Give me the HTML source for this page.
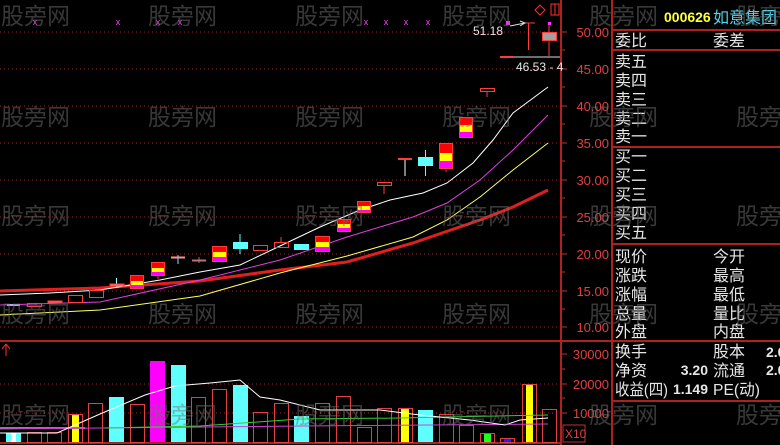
<!DOCTYPE html>
<html><head><meta charset="utf-8"><style>
html,body{margin:0;padding:0;background:#000;width:780px;height:445px;overflow:hidden}
svg{display:block}
.l{font-family:"Liberation Sans","Noto Sans CJK SC",sans-serif;font-size:16px;fill:#e6e6e6}
.ax{font-family:"Liberation Sans",sans-serif;font-size:13px;fill:#e04040;text-anchor:end}
.wm{font-family:"Liberation Sans","Noto Sans CJK SC",sans-serif;font-size:23px;fill:#707070;fill-opacity:.5}
</style></head><body>
<svg width="780" height="445" viewBox="0 0 780 445" xmlns="http://www.w3.org/2000/svg">
<rect width="780" height="445" fill="#000"/>
<g stroke="#a02020" stroke-width="1" stroke-dasharray="1,3">
<line x1="0" y1="32" x2="560" y2="32"/><line x1="0" y1="69" x2="560" y2="69"/><line x1="0" y1="106" x2="560" y2="106"/>
<line x1="0" y1="143" x2="560" y2="143"/><line x1="0" y1="180" x2="560" y2="180"/><line x1="0" y1="217" x2="560" y2="217"/>
<line x1="0" y1="254" x2="560" y2="254"/><line x1="0" y1="291" x2="560" y2="291"/><line x1="0" y1="327" x2="560" y2="327"/>
<line x1="0" y1="384" x2="560" y2="384"/><line x1="0" y1="413" x2="560" y2="413"/>
</g>
<g stroke="#b02020" stroke-width="2">
<line x1="561" y1="0" x2="561" y2="445"/><line x1="612" y1="0" x2="612" y2="445"/>
<line x1="0" y1="341" x2="780" y2="341"/><line x1="0" y1="443" x2="562" y2="443"/>
<line x1="612" y1="30" x2="780" y2="30"/><line x1="612" y1="50" x2="780" y2="50"/>
<line x1="612" y1="147" x2="780" y2="147"/><line x1="612" y1="244" x2="780" y2="244"/>
<line x1="612" y1="401" x2="780" y2="401"/>
</g>
<g stroke="#c03030" stroke-width="1">
<path d="M562 32h5M562 50h3M562 69h5M562 87h3M562 106h5M562 124h3M562 143h5M562 161h3M562 180h5M562 198h3M562 217h5M562 235h3M562 254h5M562 272h3M562 291h5M562 309h3M562 327h5M562 354h5M562 369h3M562 384h5M562 398h3M562 413h5"/>
</g>
<g class="ax">
<text x="609" y="37">50.00</text><text x="609" y="74">45.00</text><text x="609" y="111">40.00</text><text x="609" y="148">35.00</text>
<text x="609" y="185">30.00</text><text x="609" y="222">25.00</text><text x="609" y="259">20.00</text><text x="609" y="296">15.00</text><text x="609" y="332">10.00</text>
<text x="609" y="359">30000</text><text x="609" y="389">20000</text><text x="609" y="418">10000</text>
</g>
<rect x="563" y="425" width="22" height="17" fill="none" stroke="#c03030"/>
<text x="565" y="438" style="font-family:'Liberation Sans',sans-serif;font-size:12px;fill:#e04040">X10</text>
<polyline fill="none" stroke="#e02020" stroke-width="3" points="0,291 100,288 200,281 280,270 347,262 413,243 480,220 513,207 548,190"/>
<polyline fill="none" stroke="#ffff60" stroke-width="1" points="0,315 100,310 200,296 280,273 347,256 413,237 447,220 480,197 513,170 548,143"/>
<polyline fill="none" stroke="#e040e0" stroke-width="1" points="0,305 100,302 200,280 280,260 347,237 413,217 447,203 480,180 513,150 548,115"/>
<polyline fill="none" stroke="#ffffff" stroke-width="1" points="0,295 50,293 100,290 130,285 160,280 200,272 240,265 280,246 320,227 360,210 390,200 423,193 447,183 473,163 493,140 513,113 548,87"/>
<g stroke="#ff3c3c" stroke-width="1">
<line x1="7" y1="305" x2="20" y2="305" stroke="#c8a0ff" stroke-width="2"/>
<rect x="27.5" y="303.5" width="14" height="3" fill="none"/>
<rect x="48" y="301" width="14" height="2" fill="#ff6080"/>
<rect x="68.5" y="295.5" width="14" height="7" fill="none"/>
<rect x="89.5" y="290.5" width="14" height="7" fill="none"/>
<line x1="116.5" y1="278" x2="116.5" y2="288" stroke="#a0ffff"/><rect x="110" y="284" width="14" height="2" fill="#ff8080"/>
<line x1="178" y1="255" x2="178" y2="264" stroke="#60ffff"/><rect x="171" y="256.5" width="14" height="2" fill="#ff9090" stroke="none"/>
<line x1="199" y1="257" x2="199" y2="263" stroke="#c06060"/><rect x="192" y="259.5" width="14" height="2" fill="#c07070" stroke="none"/>
<line x1="240" y1="234" x2="240" y2="254" stroke="#60ffff"/><rect x="233" y="242" width="15" height="7" fill="#60ffff" stroke="none"/>
<rect x="253.5" y="245.5" width="14" height="5" fill="none"/>
<line x1="281" y1="237" x2="281" y2="242"/><rect x="274.5" y="242.5" width="14" height="5" fill="none"/>
<rect x="294" y="244" width="15" height="6" fill="#60ffff" stroke="none"/>
<line x1="384" y1="185" x2="384" y2="194"/><rect x="377.5" y="182.5" width="14" height="3" fill="none"/>
<line x1="405" y1="159" x2="405" y2="176" stroke="#fff"/><line x1="398" y1="159" x2="412" y2="159" stroke-width="2"/>
<line x1="425.5" y1="150" x2="425.5" y2="176" stroke="#60ffff"/><rect x="418" y="157" width="15" height="9" fill="#60ffff" stroke="none"/>
<line x1="487" y1="91" x2="487" y2="97"/><rect x="480.5" y="88.5" width="14" height="3" fill="none"/>
<line x1="500" y1="57" x2="560" y2="57" stroke="#ddd"/><line x1="500" y1="57" x2="513" y2="57" stroke-width="2"/>
<line x1="528.5" y1="23" x2="528.5" y2="50"/><line x1="524" y1="23" x2="535" y2="23"/>
<line x1="549" y1="23" x2="549" y2="56"/><rect x="542.5" y="32.5" width="14" height="8" fill="#a0a0a0"/>
</g>
<g stroke="#ff3c3c">
<g><rect x="130" y="275" width="14" height="6" fill="#f00" stroke="none"/><rect x="130" y="281" width="14" height="4" fill="#ff0" stroke="none"/><rect x="130" y="285" width="14" height="4" fill="#f0f" stroke="none"/><rect x="130.5" y="275.5" width="13" height="13" fill="none"/></g>
<g><line x1="158" y1="276" x2="158" y2="279"/><rect x="151" y="262" width="14" height="6" fill="#f00" stroke="none"/><rect x="151" y="268" width="14" height="4" fill="#ff0" stroke="none"/><rect x="151" y="272" width="14" height="4" fill="#f0f" stroke="none"/><rect x="151.5" y="262.5" width="13" height="13" fill="none"/></g>
<g><rect x="212" y="246" width="15" height="6" fill="#f00" stroke="none"/><rect x="212" y="252" width="15" height="5" fill="#ff0" stroke="none"/><rect x="212" y="257" width="15" height="5" fill="#f0f" stroke="none"/><rect x="212.5" y="246.5" width="14" height="15" fill="none"/></g>
<g><rect x="315" y="236" width="15" height="6" fill="#f00" stroke="none"/><rect x="315" y="242" width="15" height="5" fill="#ff0" stroke="none"/><rect x="315" y="247" width="15" height="5" fill="#f0f" stroke="none"/><rect x="315.5" y="236.5" width="14" height="15" fill="none"/></g>
<g><rect x="337" y="219" width="14" height="5" fill="#f00" stroke="none"/><rect x="337" y="224" width="14" height="4" fill="#ff0" stroke="none"/><rect x="337" y="228" width="14" height="4" fill="#f0f" stroke="none"/><rect x="337.5" y="219.5" width="13" height="12" fill="none"/></g>
<g><rect x="357" y="201" width="14" height="5" fill="#f00" stroke="none"/><rect x="357" y="206" width="14" height="4" fill="#ff0" stroke="none"/><rect x="357" y="210" width="14" height="3" fill="#f0f" stroke="none"/><rect x="357.5" y="201.5" width="13" height="11" fill="none"/></g>
<g><line x1="446" y1="169" x2="446" y2="172"/><rect x="439" y="143" width="14" height="10" fill="#f00" stroke="none"/><rect x="439" y="153" width="14" height="8" fill="#ff0" stroke="none"/><rect x="439" y="161" width="14" height="8" fill="#f0f" stroke="none"/><rect x="439.5" y="143.5" width="13" height="25" fill="none"/></g>
<g><rect x="459" y="117" width="14" height="8" fill="#f00" stroke="none"/><rect x="459" y="125" width="14" height="7" fill="#ff0" stroke="none"/><rect x="459" y="132" width="14" height="6" fill="#f0f" stroke="none"/><rect x="459.5" y="117.5" width="13" height="20" fill="none"/></g>
</g>
<g style="font-family:'Liberation Sans',sans-serif;font-size:9px;fill:#ff40ff" text-anchor="middle">
<text x="35" y="25">x</text><text x="118" y="25">x</text><text x="158" y="25">x</text><text x="180" y="25">x</text>
<text x="366" y="25">x</text><text x="386" y="25">x</text><text x="406" y="25">x</text><text x="428" y="25">x</text>
</g>
<rect x="506" y="21" width="4" height="4" fill="#ff30ff"/><rect x="548" y="22" width="3" height="3" fill="#ff30ff"/>
<text x="473" y="35" style="font-family:'Liberation Sans',sans-serif;font-size:12px;fill:#e6e6e6">51.18</text>
<path d="M510 26 L525 23 M520 21 L525 23 L520 26" stroke="#ddd" fill="none"/>
<text x="516" y="71" style="font-family:'Liberation Sans',sans-serif;font-size:12px;fill:#e6e6e6">46.53 - 4</text>
<path d="M540 5 L545 10 L540 15 L535 10 Z" fill="none" stroke="#ff3030"/>
<rect x="551" y="4" width="8" height="11" fill="none" stroke="#ff3030"/><line x1="555" y1="4" x2="555" y2="15" stroke="#ff3030"/>
<path d="M6 356 V344 M2 349 L6 344 L10 349" stroke="#ff3030" fill="none"/>
<g stroke="#e04040" stroke-width="1">
<rect x="6" y="433" width="15" height="9" fill="#60ffff" stroke="none"/><rect x="11" y="433" width="5" height="9" fill="#fff" stroke="none"/>
<rect x="27.5" y="432.5" width="14" height="10" fill="none"/>
<rect x="47.5" y="432.5" width="14" height="10" fill="none"/>
<rect x="68.5" y="414.5" width="14" height="28" fill="none"/><rect x="72" y="415" width="7" height="27" fill="#ff0" stroke="none"/>
<rect x="88.5" y="403.5" width="14" height="39" fill="none"/>
<rect x="109" y="397" width="15" height="45" fill="#60ffff" stroke="none"/>
<rect x="130.5" y="404.5" width="14" height="38" fill="none"/>
<rect x="150" y="361" width="15" height="81" fill="#ff00ff" stroke="none"/>
<rect x="171" y="365" width="15" height="77" fill="#60ffff" stroke="none"/>
<rect x="191.5" y="397.5" width="14" height="45" fill="none"/>
<rect x="212.5" y="389.5" width="14" height="53" fill="none"/>
<rect x="233" y="385" width="15" height="57" fill="#60ffff" stroke="none"/>
<rect x="253.5" y="412.5" width="14" height="30" fill="none"/>
<rect x="274.5" y="403.5" width="14" height="39" fill="none"/>
<rect x="294" y="416" width="15" height="26" fill="#60ffff" stroke="none"/>
<rect x="315.5" y="403.5" width="14" height="39" fill="none"/>
<rect x="336.5" y="396.5" width="14" height="46" fill="none"/>
<rect x="357.5" y="427.5" width="14" height="15" fill="none"/>
<rect x="377.5" y="408.5" width="14" height="34" fill="none"/>
<rect x="398.5" y="408.5" width="14" height="34" fill="none"/><rect x="401" y="409" width="8" height="33" fill="#ff0" stroke="none"/>
<rect x="418" y="410" width="15" height="32" fill="#60ffff" stroke="none"/>
<rect x="439.5" y="414.5" width="14" height="28" fill="none"/>
<rect x="459.5" y="425.5" width="14" height="17" fill="none"/>
<rect x="480.5" y="433.5" width="14" height="9" fill="none"/><rect x="484" y="434" width="7" height="8" fill="#20ff20" stroke="none"/>
<rect x="500.5" y="438.5" width="14" height="4" fill="none"/><rect x="504" y="439" width="7" height="3" fill="#2020ff" stroke="none"/>
<rect x="522.5" y="384.5" width="14" height="58" fill="none"/><rect x="526" y="385" width="7" height="57" fill="#ff0" stroke="none"/>
<rect x="542.5" y="409.5" width="14" height="33" fill="none"/>
</g>
<polyline fill="none" stroke="#888" stroke-width="2" points="0,428 85,428"/>
<polyline fill="none" stroke="#d040d0" stroke-width="1" points="0,429 100,428 300,426 548,424"/>
<polyline fill="none" stroke="#30d030" stroke-width="1" points="105,428 200,426 300,419 400,418 548,415"/>
<polyline fill="none" stroke="#fff" stroke-width="1" points="0,433 57,433 100,414 145,395 175,386 210,383 240,380 260,397 280,400 320,410 380,410 420,415 470,420 505,425 520,420 548,418"/>
<text x="664" y="22" style="font-family:'Liberation Sans',sans-serif;font-size:14px;font-weight:bold;fill:#ffff40">000626</text>
<text x="713" y="23" style="font-family:'Liberation Sans','Noto Sans CJK SC',sans-serif;font-size:16px;fill:#50d8f0">如意集团</text>
<g class="l">
<text x="615" y="46">委比</text><text x="713" y="46">委差</text>
<text x="615" y="67">卖五</text><text x="615" y="86">卖四</text><text x="615" y="105">卖三</text><text x="615" y="124">卖二</text><text x="615" y="142">卖一</text>
<text x="615" y="162">买一</text><text x="615" y="181">买二</text><text x="615" y="200">买三</text><text x="615" y="219">买四</text><text x="615" y="238">买五</text>
<text x="615" y="262">现价</text><text x="713" y="262">今开</text>
<text x="615" y="281">涨跌</text><text x="713" y="281">最高</text>
<text x="615" y="300">涨幅</text><text x="713" y="300">最低</text>
<text x="615" y="319">总量</text><text x="713" y="319">量比</text>
<text x="615" y="337">外盘</text><text x="713" y="337">内盘</text>
<text x="615" y="357">换手</text><text x="713" y="357">股本</text>
<text x="615" y="376">净资</text><text x="713" y="376">流通</text>
<text x="615" y="395" textLength="53" lengthAdjust="spacingAndGlyphs">收益(四)</text><text x="713" y="395" textLength="47" lengthAdjust="spacingAndGlyphs">PE(动)</text>
</g>
<g style="font-family:'Liberation Sans',sans-serif;font-size:14px;font-weight:bold;fill:#e6e6e6">
<text x="708" y="375" text-anchor="end">3.20</text><text x="708" y="394" text-anchor="end">1.149</text>
<text x="766" y="357">2.0</text><text x="766" y="375">2.0</text>
</g>
<g class="wm">
<text x="1" y="24">股旁网</text><text x="148" y="24">股旁网</text><text x="295" y="24">股旁网</text><text x="442" y="24">股旁网</text><text x="589" y="24">股旁网</text><text x="736" y="24">股旁网</text>
<text x="1" y="125">股旁网</text><text x="148" y="125">股旁网</text><text x="295" y="125">股旁网</text><text x="442" y="125">股旁网</text><text x="589" y="125">股旁网</text><text x="736" y="125">股旁网</text>
<text x="1" y="224">股旁网</text><text x="148" y="224">股旁网</text><text x="295" y="224">股旁网</text><text x="442" y="224">股旁网</text><text x="589" y="224">股旁网</text><text x="736" y="224">股旁网</text>
<text x="1" y="322">股旁网</text><text x="148" y="322">股旁网</text><text x="295" y="322">股旁网</text><text x="442" y="322">股旁网</text><text x="589" y="322">股旁网</text><text x="736" y="322">股旁网</text>
<text x="1" y="423">股旁网</text><text x="148" y="423">股旁网</text><text x="295" y="423">股旁网</text><text x="442" y="423">股旁网</text><text x="589" y="423">股旁网</text><text x="736" y="423">股旁网</text>
</g>
</svg>
</body></html>
